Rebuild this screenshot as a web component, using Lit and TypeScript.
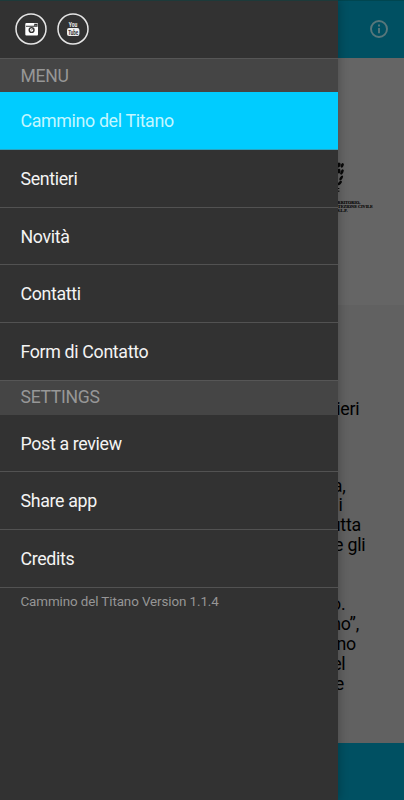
import { LitElement, html, css } from "lit";
import { customElement } from "lit/decorators.js";

const menu = ["Cammino del Titano", "Sentieri", "Novità", "Contatti", "Form di Contatto"];
const settings = ["Post a review", "Share app", "Credits"];
// Each paragraph holds its lines as [text, right edge].
const paragraphs: [string, number][][] = [
  [["ieri", 359.5]],
  [["a,", 345.5], ["i", 342.5], ["utta", 361], ["e gli", 365.5]],
  [["o.", 345.5], ["no”,", 359], ["no", 356], ["el", 345.5], ["e", 344]],
];

@customElement("app-root")
export class AppRoot extends LitElement {
  static styles = css`
    :host { display: block; position: relative; width: 404px; height: 800px; overflow: hidden; font-family: Roboto, sans-serif; }
    * { box-sizing: border-box; }
    .page { display: grid; grid-template-rows: 58px 247px 437.5px 57.5px; height: 800px; background: #616161; color: #000; }
    .bar { background: #005062; display: flex; align-items: center; justify-content: flex-end; padding: 0 15px 2px 0; border-top: 1px solid #004650; }
    .foot { background: #005062; }
    .hero { background: #656565; padding: 104px 0 0 329px; }
    .hero svg { display: block; }
    .crest { font: 700 4.2px/4px "Liberation Serif", serif; white-space: nowrap; margin-top: 7px; -webkit-text-stroke: 0.1px #000; }
    .copy { padding-top: 94.4px; font-size: 17.8px; letter-spacing: -0.2px; line-height: 19.8px; }
    .copy p { margin: 0 0 56.5px; }
    .copy p + p { margin-bottom: 39.6px; }
    .line { display: block; text-align: right; white-space: nowrap; }
    .drawer { position: absolute; left: 0; top: 0; width: 338px; height: 800px; background: #323232; box-shadow: 0 0 10px rgba(0,0,0,.3); border-top: 1px solid #1d3a3a; }
    .social { height: 57px; padding: 0 0 2px 15px; display: flex; align-items: center; gap: 9.5px; }
    .social svg { display: block; }
    h2 { margin: 0; height: 34px; padding-left: 20.5px; font-weight: 400; font-size: 17.6px; letter-spacing: -0.3px; line-height: 34px; color: #979797; background: #454545; border-top: 1px solid #565656; }
    .second { height: 35px; line-height: 33px; }
    ul { margin: 0; padding: 0; list-style: none; }
    li { height: 57.75px; padding-left: 20.5px; line-height: 58px; font-size: 17.8px; letter-spacing: -0.34px; color: #f4f4f4; border-bottom: 1px solid #525252; }
    .active { background: #00ccff; color: #c3f7ff; border-color: #2aa4c0; }
    .menu { height: 288px; }
    .settings { margin-top: -0.4px; }
    .version { padding: 6.4px 0 0 20.5px; font-size: 13.4px; letter-spacing: -0.1px; line-height: 16px; color: #969696; }
  `;

  render() {
    const row = (label: string, i: number, on = false) => html`<li class=${on && i === 0 ? "active" : "item"}>${label}</li>`;
    return html`
      <div class="page">
        <div class="bar">
          <svg width="20" height="20" viewBox="0 0 20 20" fill="none" stroke="#58777b" stroke-width="1.9">
            <circle cx="10" cy="10" r="8" /><path d="M10 9v5.2M10 5.6v1.9" />
          </svg>
        </div>
        <div class="hero">
          <svg width="16" height="32" viewBox="0 0 16 32" fill="#080808">
            <ellipse cx="9.8" cy="3" rx="1.8" ry="2.4" transform="rotate(20 9.8 3)" />
            <ellipse cx="13.2" cy="3.4" rx="1.4" ry="2.4" transform="rotate(25 13.2 3.4)" />
            <ellipse cx="10" cy="9" rx="1.5" ry="2.6" />
            <ellipse cx="13" cy="10" rx="1.4" ry="2.8" transform="rotate(25 13 10)" />
            <ellipse cx="12.2" cy="16" rx="2.7" ry="1.3" transform="rotate(-55 12.2 16)" />
            <ellipse cx="10.8" cy="21" rx="2.7" ry="1.3" transform="rotate(-45 10.8 21)" />
            <path d="M9 26h1.3v1H9zM9.3 28.5h1V30h-1z" />
          </svg>
          <div class="crest">UTERRITORIO,<br />PROTEZIONE CIVILE<br />A.A.S.L.P.</div>
        </div>
        <div class="copy">
          ${paragraphs.map((p) => html`<p>${p.map(([t, w]) => html`<span class="line" style="width:${w}px">${t}</span>`)}</p>`)}
        </div>
        <div class="foot"></div>
      </div>
      <nav class="drawer">
        <div class="social">
          <svg width="32" height="32" viewBox="0 0 32 32" fill="none">
            <circle cx="16" cy="16" r="15" stroke="#e6e6e6" stroke-width="1.5" />
            <rect x="10.3" y="10" width="12.7" height="12.6" rx="1" fill="#fff" />
            <path d="M11 13.2h8.3M19.8 11.4h2.2v1.7h-2.2z" stroke="#323232" stroke-width="1.1" />
            <circle cx="16.6" cy="17" r="2.4" stroke="#323232" stroke-width="1.4" />
            <path d="M16 17.5l2.4-2.4" stroke="#323232" stroke-width=".8" />
          </svg>
          <svg width="32" height="32" viewBox="0 0 32 32" fill="none">
            <circle cx="16" cy="16" r="15" stroke="#e6e6e6" stroke-width="1.5" />
            <text x="16" y="14" text-anchor="middle" textLength="8.5" lengthAdjust="spacingAndGlyphs" font-family="Roboto" font-size="7" font-weight="700" fill="#eee">You</text>
            <rect x="10" y="15" width="12.4" height="8" rx="2" fill="#eee" />
            <text x="16.2" y="21.9" text-anchor="middle" textLength="10" lengthAdjust="spacingAndGlyphs" font-family="Roboto" font-size="6.4" font-weight="700" fill="#323232">Tube</text>
          </svg>
        </div>
        <h2>MENU</h2>
        <ul class="menu">${menu.map((m, i) => row(m, i, true))}</ul>
        <h2 class="second">SETTINGS</h2>
        <ul class="settings">${settings.map((m, i) => row(m, i))}</ul>
        <div class="version">Cammino del Titano Version 1.1.4</div>
      </nav>
    `;
  }
}
